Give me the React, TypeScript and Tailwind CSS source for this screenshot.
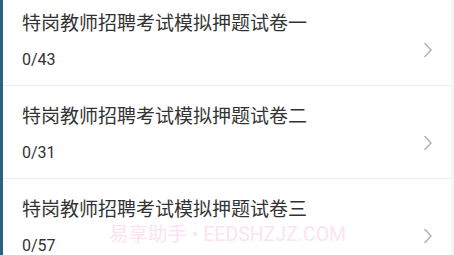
import React from "react";

type Paper = {
  title: string;
  done: number;
  total: number;
};

const papers: Paper[] = [
  { title: "特岗教师招聘考试模拟押题试卷一", done: 0, total: 43 },
  { title: "特岗教师招聘考试模拟押题试卷二", done: 0, total: 31 },
  { title: "特岗教师招聘考试模拟押题试卷三", done: 0, total: 57 },
];

const Chevron = () => (
  <svg width="10" height="16" viewBox="0 0 10 16" fill="none">
    <path
      d="M2 1.5 L8 8 L2 14.5"
      stroke="#b4b4b4"
      strokeWidth="1.6"
      strokeLinecap="round"
      strokeLinejoin="round"
    />
  </svg>
);

const App: React.FC = () => {
  return (
    <div
      className="relative w-[454px] h-[255px] overflow-hidden bg-white flex"
      style={{ fontFamily: "Roboto, 'Noto Sans CJK SC', sans-serif" }}
    >
      {/* left accent strip */}
      <div className="w-[3px] shrink-0 bg-[#2c6183]" />

      {/* list */}
      <div className="flex-1 -mt-[7px]">
        {papers.map((p, i) => (
          <div
            key={i}
            className="flex items-start h-[93px] border-b border-[#efefef] pl-[19px] pr-[18px]"
          >
            <div className="flex-1 pt-[17px]">
              <div className="text-[19px] leading-[28px] text-[#333333]">
                {p.title}
              </div>
              <div className="mt-[11px] text-[16px] leading-[22px] text-[#333333]">
                {p.done}/{p.total}
              </div>
            </div>
            <div className="pt-[49px]">
              <Chevron />
            </div>
          </div>
        ))}
      </div>

      {/* right edge */}
      <div className="w-[3px] shrink-0 bg-[#f7f7f7]" />

      {/* watermark */}
      <div className="absolute left-[109px] top-[224px] text-[19.5px] leading-[22px] text-[#fbe3f3] whitespace-nowrap pointer-events-none">
        易享助手 • EEDSHZJZ.COM
      </div>
    </div>
  );
};

export default App;
